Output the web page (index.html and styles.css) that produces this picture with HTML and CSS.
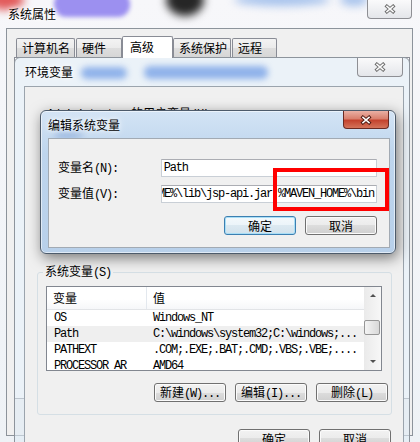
FILE: index.html
```html
<!DOCTYPE html>
<html lang="zh-CN">
<head>
    <meta charset="UTF-8">
    <meta name="viewport" content="width=device-width, initial-scale=1.0">
    <title>系统属性</title>
    <link rel="stylesheet" href="styles.css">
</head>
<body>
<div class="desk">

    <!-- 系统属性 -->
    <div class="win sys">
        <div class="bar">
            <span class="blur b-red"></span>
            <span class="blur b-violet"></span>
            <span class="blur b-dark"></span>
            <span class="blur b-sky1"></span>
            <span class="blur b-sky2"></span>
            <span class="caption">系统属性</span>
            <span class="close">
                <svg viewBox="0 0 12 10"><path class="xo" d="M1.6 1.2L10.4 8.8M10.4 1.2L1.6 8.8"/><path class="xi" d="M2.4 1.9L9.6 8.1M9.6 1.9L2.4 8.1"/></svg>
            </span>
        </div>
        <div class="client">
            <div class="tabs">
                <div class="tab">计算机名</div>
                <div class="tab">硬件</div>
                <div class="tab active">高级</div>
                <div class="tab">系统保护</div>
                <div class="tab">远程</div>
            </div>
            <div class="tabpanel"></div>
        </div>
    </div>

    <!-- 环境变量 -->
    <div class="win env">
        <div class="bar">
            <span class="blur b-text1"></span>
            <span class="blur b-text2"></span>
            <span class="caption">环境变量</span>
            <span class="close">
                <svg viewBox="0 0 12 10"><path class="xo" d="M1.6 1.2L10.4 8.8M10.4 1.2L1.6 8.8"/><path class="xi" d="M2.4 1.9L9.6 8.1M9.6 1.9L2.4 8.1"/></svg>
            </span>
        </div>
        <div class="client">
            <div class="user-label"><span class="lat">Administrator </span>的用户变量<span class="lat">(U)</span></div>
            <fieldset class="group">
                <legend>系统变量<span class="lat">(S)</span></legend>
                <div class="list">
                    <div class="cols">
                        <div class="head">
                            <span class="c1">变量</span>
                            <span class="c2">值</span>
                        </div>
                        <div class="row"><span class="c1">OS</span><span class="c2">Windows_NT</span></div>
                        <div class="row sel"><span class="c1">Path</span><span class="c2">C:\windows\system32;C:\windows;...</span></div>
                        <div class="row"><span class="c1">PATHEXT</span><span class="c2">.COM;.EXE;.BAT;.CMD;.VBS;.VBE;....</span></div>
                        <div class="row"><span class="c1">PROCESSOR_AR</span><span class="c2">AMD64</span></div>
                    </div>
                    <div class="vscroll">
                        <div class="arrow"><i class="up"></i></div>
                        <div class="thumb"></div>
                        <div class="track"></div>
                        <div class="arrow"><i class="down"></i></div>
                    </div>
                </div>
                <div class="btn-row">
                    <button class="btn">新建<span class="lat">(W)...</span></button>
                    <button class="btn">编辑<span class="lat">(I)...</span></button>
                    <button class="btn">删除<span class="lat">(L)</span></button>
                </div>
            </fieldset>
            <div class="btn-row footer">
                <button class="btn">确定</button>
                <button class="btn">取消</button>
            </div>
        </div>
    </div>

    <!-- 编辑系统变量 -->
    <div class="win edit">
        <div class="bar">
            <span class="blur b-text3"></span>
            <span class="caption">编辑系统变量</span>
            <span class="close red">
                <svg viewBox="0 0 12 10"><path class="xo" d="M1.6 1.2L10.4 8.8M10.4 1.2L1.6 8.8"/><path class="xi" d="M2.4 1.9L9.6 8.1M9.6 1.9L2.4 8.1"/></svg>
            </span>
        </div>
        <div class="client">
            <div class="field">
                <label>变量名<span class="lat">(N):</span></label>
                <div class="input">Path</div>
            </div>
            <div class="field">
                <label>变量值<span class="lat">(V):</span></label>
                <div class="input end">%CATALINA_HOME%\lib\jsp-api.jar;%MAVEN_HOME%\bin</div>
            </div>
            <div class="btn-row">
                <button class="btn def">确定</button>
                <button class="btn">取消</button>
            </div>
        </div>
    </div>

    <div class="mark"></div>
</div>
</body>
</html>
```

FILE: styles.css
```css
* {
    box-sizing: border-box;
}
body {
    margin: 0;
    font-family: "Noto Sans CJK SC", sans-serif;
    font-size: 12px;
    line-height: 14px;
    color: #000;
    background: #eef1f5;
    overflow: hidden;
}
.lat {
    font-family: "Liberation Mono", monospace;
    letter-spacing: -1.2px;
}
.desk {
    position: relative;
    width: 420px;
    height: 442px;
    overflow: hidden;
}
.win {
    position: absolute;
}

/* title bars */
.bar {
    position: relative;
    overflow: hidden;
}
.caption {
    position: relative;
    text-shadow: 0 0 4px #fff, 0 0 8px #fff;
}
.blur {
    position: absolute;
    border-radius: 50%;
    filter: blur(4px);
}
.close {
    position: absolute;
    top: 0;
    height: 19px;
    display: flex;
    align-items: center;
    justify-content: center;
    border: 1px solid #8e8f94;
    border-top: none;
    border-radius: 0 0 4px 4px;
    background: linear-gradient(#fafafb, #e4e6ea);
}
.close svg {
    width: 12px;
    height: 10px;
}
.close .xo {
    fill: none;
    stroke: #6e6e6e;
    stroke-width: 3.4;
}
.close .xi {
    fill: none;
    stroke: #fbfbfb;
    stroke-width: 1.5;
}

/* 系统属性 */
.sys {
    left: 0;
    top: 0;
    width: 420px;
    height: 442px;
    background: linear-gradient(#f7f7fa, #eef2f6);
}
.sys .bar {
    height: 28px;
    padding: 7px 0 0 8px;
}
.sys .close {
    left: 367px;
    width: 45px;
}
.b-red { left: -12px; top: -10px; width: 36px; height: 20px; background: #e25a5a; }
.b-violet { left: 54px; top: -8px; width: 76px; height: 25px; background: #9c90f0; border-radius: 12px; filter: blur(2px); }
.b-dark { left: 166px; top: -16px; width: 38px; height: 32px; background: #262626; }
.b-sky1 { left: 234px; top: -7px; width: 96px; height: 13px; background: #a6c2ec; }
.b-sky2 { left: 340px; top: -7px; width: 28px; height: 13px; background: #a6c2ec; }

.sys .client {
    margin-left: 6px;
    width: 407px;
    height: 408px;
    border: 1px solid #8c939b;
    background: #f0f0f0;
    padding: 7px 0 0 9px;
}
.tabs {
    display: flex;
    align-items: flex-end;
    height: 21px;
}
.tab {
    position: relative;
    height: 19px;
    padding: 2px 0 0 5px;
    margin-right: 1px;
    border: 1px solid #898c95;
    border-bottom: none;
    border-radius: 2px 2px 0 0;
    background: linear-gradient(#f3f3f3, #ebebeb 50%, #dedede 50%, #d6d6d6);
}
.tab:nth-child(1) { width: 59px; }
.tab:nth-child(2) { width: 46px; }
.tab:nth-child(3) { width: 51px; }
.tab:nth-child(4) { width: 58px; }
.tab:nth-child(5) { width: 45px; }
.tab.active {
    z-index: 1;
    height: 22px;
    margin: 0 0 -1px -1px;
    padding: 3px 0 0 7px;
    background: #fff;
}
.tabpanel {
    margin-left: -2px;
    width: 396px;
    height: 342px;
    border: 1px solid #898c95;
    background: #fcfcfc;
}

/* 环境变量 */
.env {
    left: 14px;
    top: 57px;
    width: 396px;
    height: 400px;
    border: 1px solid #8d949c;
    border-radius: 6px 6px 0 0;
    background: rgba(224, 235, 245, 0.6);
}
.env .bar {
    height: 28px;
    padding: 7px 0 0 10px;
}
.env .close {
    left: 342px;
    width: 46px;
}
.b-text1 { left: 66px; top: 9px; width: 46px; height: 12px; background: #8fb2ea; border-radius: 6px; filter: blur(3px); }
.b-text2 { left: 129px; top: 8px; width: 124px; height: 13px; background: #8fb2ea; border-radius: 6px; filter: blur(3px); }
.env .client {
    margin-left: 9px;
    width: 380px;
    height: 372px;
    border: 1px solid #9ba4ad;
    background: #f0f0f0;
}
.user-label {
    margin: 19px 0 0 22px;
}
.group {
    margin: 142px 0 0 12px;
    width: 355px;
    padding: 6px 2px 12px 8px;
    border: 1px solid #d5dfe5;
    border-radius: 3px;
    min-width: 0;
}
.group legend {
    padding: 0 2px;
    margin-left: -3px;
    line-height: 14px;
}

.list {
    display: flex;
    width: 336px;
    height: 85px;
    border: 1px solid #828790;
    background: #fff;
    overflow: hidden;
}
.cols {
    flex: 1;
    min-width: 0;
}
.head {
    display: flex;
    align-items: center;
    height: 23px;
    border-bottom: 1px solid #e2e4e7;
    background: linear-gradient(#fff 55%, #f6f7f9);
}
.head .c1 {
    width: 100px;
    height: 22px;
    line-height: 22px;
    padding-left: 6px;
    border-right: 1px solid #e3e8ee;
}
.head .c2 {
    padding-left: 6px;
}
.row {
    display: flex;
    align-items: center;
    height: 16px;
    font-family: "Liberation Mono", monospace;
    letter-spacing: -1.2px;
    white-space: nowrap;
}
.row.sel {
    background: #efefef;
}
.row .c1 {
    width: 100px;
    padding-left: 7px;
    overflow: hidden;
}
.row .c2 {
    padding-left: 6px;
}
.vscroll {
    display: flex;
    flex-direction: column;
    width: 17px;
    background: linear-gradient(90deg, #eaeaea, #f7f7f7);
}
.arrow {
    display: flex;
    align-items: center;
    justify-content: center;
    height: 17px;
}
.arrow i {
    width: 0;
    height: 0;
    border-left: 3px solid transparent;
    border-right: 3px solid transparent;
}
.arrow .up {
    border-bottom: 3px solid #505050;
}
.arrow .down {
    border-top: 3px solid #505050;
}
.thumb {
    margin: 16px 1px 0 0;
    height: 15px;
    border: 1px solid #969696;
    border-radius: 2px;
    background: linear-gradient(90deg, #f4f4f4, #e6e6e6 50%, #d8d8d8);
}
.track {
    flex: 1;
}

/* buttons */
.btn-row {
    display: flex;
    justify-content: flex-end;
    gap: 9px;
}
.group .btn-row {
    margin-top: 12px;
    padding-right: 1px;
}
.footer {
    margin-top: 14px;
    padding-right: 12px;
}
.btn {
    width: 72px;
    height: 19px;
    padding: 0;
    border: 1px solid #707070;
    border-radius: 3px;
    background: linear-gradient(#f2f2f2, #ebebeb 50%, #dddddd 50%, #cfcfcf);
    box-shadow: inset 0 0 0 1px #fbfbfb;
    font-family: inherit;
    font-size: 12px;
    line-height: 14px;
    color: #000;
}
.btn.def {
    border-color: #3c7fb1;
    box-shadow: inset 0 0 0 1px #a9def6;
    background: linear-gradient(#f4f9fc, #ebf4f9 50%, #dce9f1 50%, #d2e2ec);
}

/* 编辑系统变量 */
.edit {
    left: 40px;
    top: 110px;
    width: 356px;
    height: 144px;
    border: 1px solid #4d5b6b;
    border-radius: 6px;
    background: linear-gradient(#d3e4f5, #bed5ed 30%, #b8d0ea);
    box-shadow: inset 0 0 0 1px rgba(255, 255, 255, 0.55), 2px 4px 14px rgba(0, 0, 0, 0.5);
}
.edit .bar {
    height: 27px;
    padding: 7px 0 0 7px;
}
.b-text3 { left: 12px; top: 20px; width: 30px; height: 8px; background: #9bb8e0; filter: blur(3px); }
.close.red {
    left: 302px;
    width: 46px;
    height: 18px;
    border-color: #6b2a22;
    background: linear-gradient(#eab0a4, #d9806e 45%, #c4432e 55%, #d4735a);
}
.close.red .xo {
    stroke: #4e1a12;
}
.close.red .xi {
    stroke: #fff;
}
.edit .client {
    margin-left: 7px;
    width: 342px;
    height: 110px;
    border: 1px solid #a2aab3;
    background: #f0f0f0;
    padding: 20px 12px 0 9px;
}
.field {
    display: flex;
    align-items: center;
    height: 18px;
}
.field + .field {
    margin-top: 8px;
}
.field label {
    width: 103px;
}
.input {
    display: flex;
    align-items: center;
    width: 217px;
    height: 18px;
    padding: 0 2px;
    border: 1px solid #c9cfd6;
    border-top-color: #abadb3;
    background: #fff;
    overflow: hidden;
    white-space: nowrap;
    font-family: "Liberation Mono", monospace;
    letter-spacing: -1.2px;
}
.input.end {
    justify-content: flex-end;
}
.edit .btn-row {
    margin-top: 13px;
}

.mark {
    position: absolute;
    left: 273px;
    top: 168px;
    width: 116px;
    height: 43px;
    border: 4px solid #ff0000;
}
```
